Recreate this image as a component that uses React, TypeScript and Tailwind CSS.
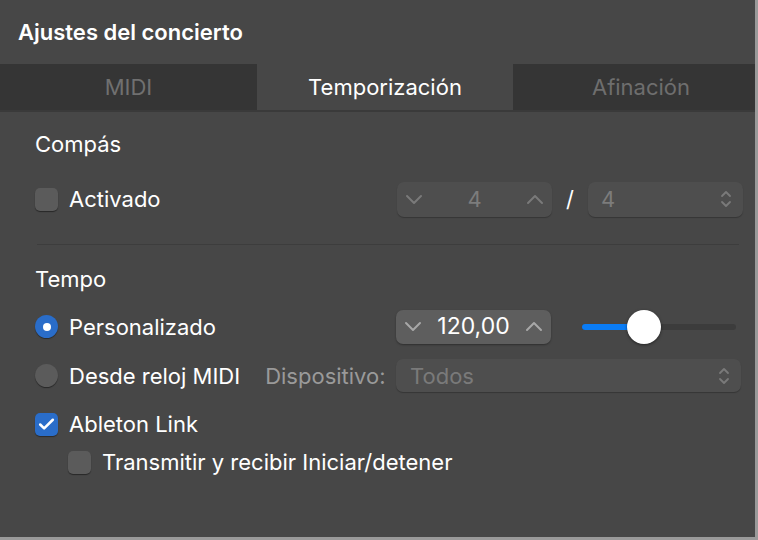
import { Check } from 'lucide-react'

const font = { fontFamily: 'Inter, "Noto Sans", sans-serif' }

function Chevron({ dir, className }: { dir: 'up' | 'down'; className?: string }) {
  return (
    <svg width="18" height="11" viewBox="0 0 18 11" className={className}>
      <path
        d={dir === 'down' ? 'M2 2 L9 9 L16 2' : 'M2 9 L9 2 L16 9'}
        fill="none"
        stroke="currentColor"
        strokeWidth="2"
        strokeLinecap="round"
        strokeLinejoin="round"
      />
    </svg>
  )
}

function UpDown() {
  return (
    <svg width="12" height="20" viewBox="0 0 12 20" className="text-[#7a7a7a]">
      <path d="M2 7 L6 3 L10 7 M2 13 L6 17 L10 13" fill="none" stroke="currentColor" strokeWidth="1.8" strokeLinecap="round" strokeLinejoin="round" />
    </svg>
  )
}

function Box({ checked = false }: { checked?: boolean }) {
  return checked ? (
    <div className="w-[23px] h-[23px] shrink-0 rounded-[5px] bg-[#2a6dc9] flex items-center justify-center shadow-[0_1px_1px_rgba(0,0,0,0.4)]">
      <Check className="w-[19px] h-[19px] text-white" strokeWidth={3.2} />
    </div>
  ) : (
    <div className="w-[23px] h-[23px] shrink-0 rounded-[5px] bg-[#5b5b5b] shadow-[0_1px_1px_rgba(0,0,0,0.45)]" />
  )
}

function Radio({ on = false }: { on?: boolean }) {
  return on ? (
    <div className="w-[23px] h-[23px] shrink-0 rounded-full bg-[#2a6dc9] flex items-center justify-center shadow-[0_1px_1px_rgba(0,0,0,0.4)]">
      <div className="w-[8px] h-[8px] rounded-full bg-white" />
    </div>
  ) : (
    <div className="w-[23px] h-[23px] shrink-0 rounded-full bg-[#5b5b5b] shadow-[0_1px_1px_rgba(0,0,0,0.45)]" />
  )
}

export default function App() {
  return (
    <div className="w-[758px] h-[540px] bg-[#9a9a9a]" style={font}>
      <div className="w-[755px] h-[537px] bg-[#474747] flex flex-col">
        {/* title */}
        <div className="h-[64px] flex items-center pl-[18px] text-[22px] font-semibold text-white">
          Ajustes del concierto
        </div>

        {/* tabs */}
        <div className="h-[48px] flex bg-[#353535] text-[22px] border-b-2 border-[#3a3a3a]">
          <div className="w-[257px] flex items-center justify-center text-[#707070]">MIDI</div>
          <div className="w-[256px] flex items-center justify-center bg-[#474747] text-white">Temporización</div>
          <div className="flex-1 flex items-center justify-center pl-[14px] text-[#6e6e6e]">Afinación</div>
        </div>

        <div className="flex flex-col pl-[35px] pr-[12px] text-[22px] leading-none text-white">
          {/* Compás */}
          <div className="mt-[20px] h-[24px] flex items-center">Compás</div>
          <div className="mt-[25px] h-[36px] flex items-center">
            <Box />
            <span className="ml-[11px]">Activado</span>
            <div className="ml-auto flex items-center">
              <div className="w-[155px] h-[35px] rounded-[7px] bg-[#4e4e4e] flex items-center justify-between px-[8px] text-[#7a7a7a] shadow-[0_1px_1px_rgba(0,0,0,0.25)]">
                <Chevron dir="down" />
                <span className="text-[#7c7c7c]">4</span>
                <Chevron dir="up" />
              </div>
              <span className="mx-[14px] text-white text-[22px]">/</span>
              <div className="w-[155px] h-[35px] rounded-[7px] bg-[#4e4e4e] flex items-center justify-between pl-[13px] pr-[11px] shadow-[0_1px_1px_rgba(0,0,0,0.25)]">
                <span className="text-[#7c7c7c]">4</span>
                <UpDown />
              </div>
            </div>
          </div>

          <div className="mt-[27px] h-px bg-[#3d3d3d] ml-[2px] mr-[4px]" />

          {/* Tempo */}
          <div className="mt-[22px] h-[24px] flex items-center">Tempo</div>
          <div className="mt-[18px] h-[35px] flex items-center">
            <Radio on />
            <span className="ml-[11px]">Personalizado</span>
            <div className="ml-auto flex items-center">
              <div className="w-[155px] h-[34px] rounded-[7px] bg-[#5e5e5e] flex items-center justify-between px-[8px] text-[#a8a8a8] shadow-[0_1px_2px_rgba(0,0,0,0.35)]">
                <Chevron dir="down" />
                <span className="text-white text-[23px]">120,00</span>
                <Chevron dir="up" />
              </div>
              <div className="ml-[31px] mr-[7px] w-[154px] h-[34px] relative flex items-center">
                <div className="w-full h-[6px] rounded-full bg-[#3c3c3c] flex">
                  <div className="w-[64px] h-full rounded-full bg-[#0a7cf5]" />
                </div>
                <div className="absolute left-[45px] top-0 w-[34px] h-[34px] rounded-full bg-white shadow-[0_1px_3px_rgba(0,0,0,0.5)]" />
              </div>
            </div>
          </div>
          <div className="mt-[15px] h-[33px] flex items-center">
            <Radio />
            <span className="ml-[11px]">Desde reloj MIDI</span>
            <span className="ml-[25px] text-[#9a9a9a]">Dispositivo:</span>
            <div className="ml-auto mr-[2px] w-[345px] h-[33px] rounded-[7px] bg-[#4e4e4e] flex items-center justify-between pl-[14px] pr-[11px] shadow-[0_1px_1px_rgba(0,0,0,0.25)]">
              <span className="text-[#7a7a7a]">Todos</span>
              <UpDown />
            </div>
          </div>

          <div className="mt-[19px] h-[26px] flex items-center">
            <Box checked />
            <span className="ml-[11px]">Ableton Link</span>
          </div>
          <div className="mt-[12px] h-[26px] flex items-center pl-[33px]">
            <Box />
            <span className="ml-[11px]">Transmitir y recibir Iniciar/detener</span>
          </div>
        </div>
      </div>
    </div>
  )
}
